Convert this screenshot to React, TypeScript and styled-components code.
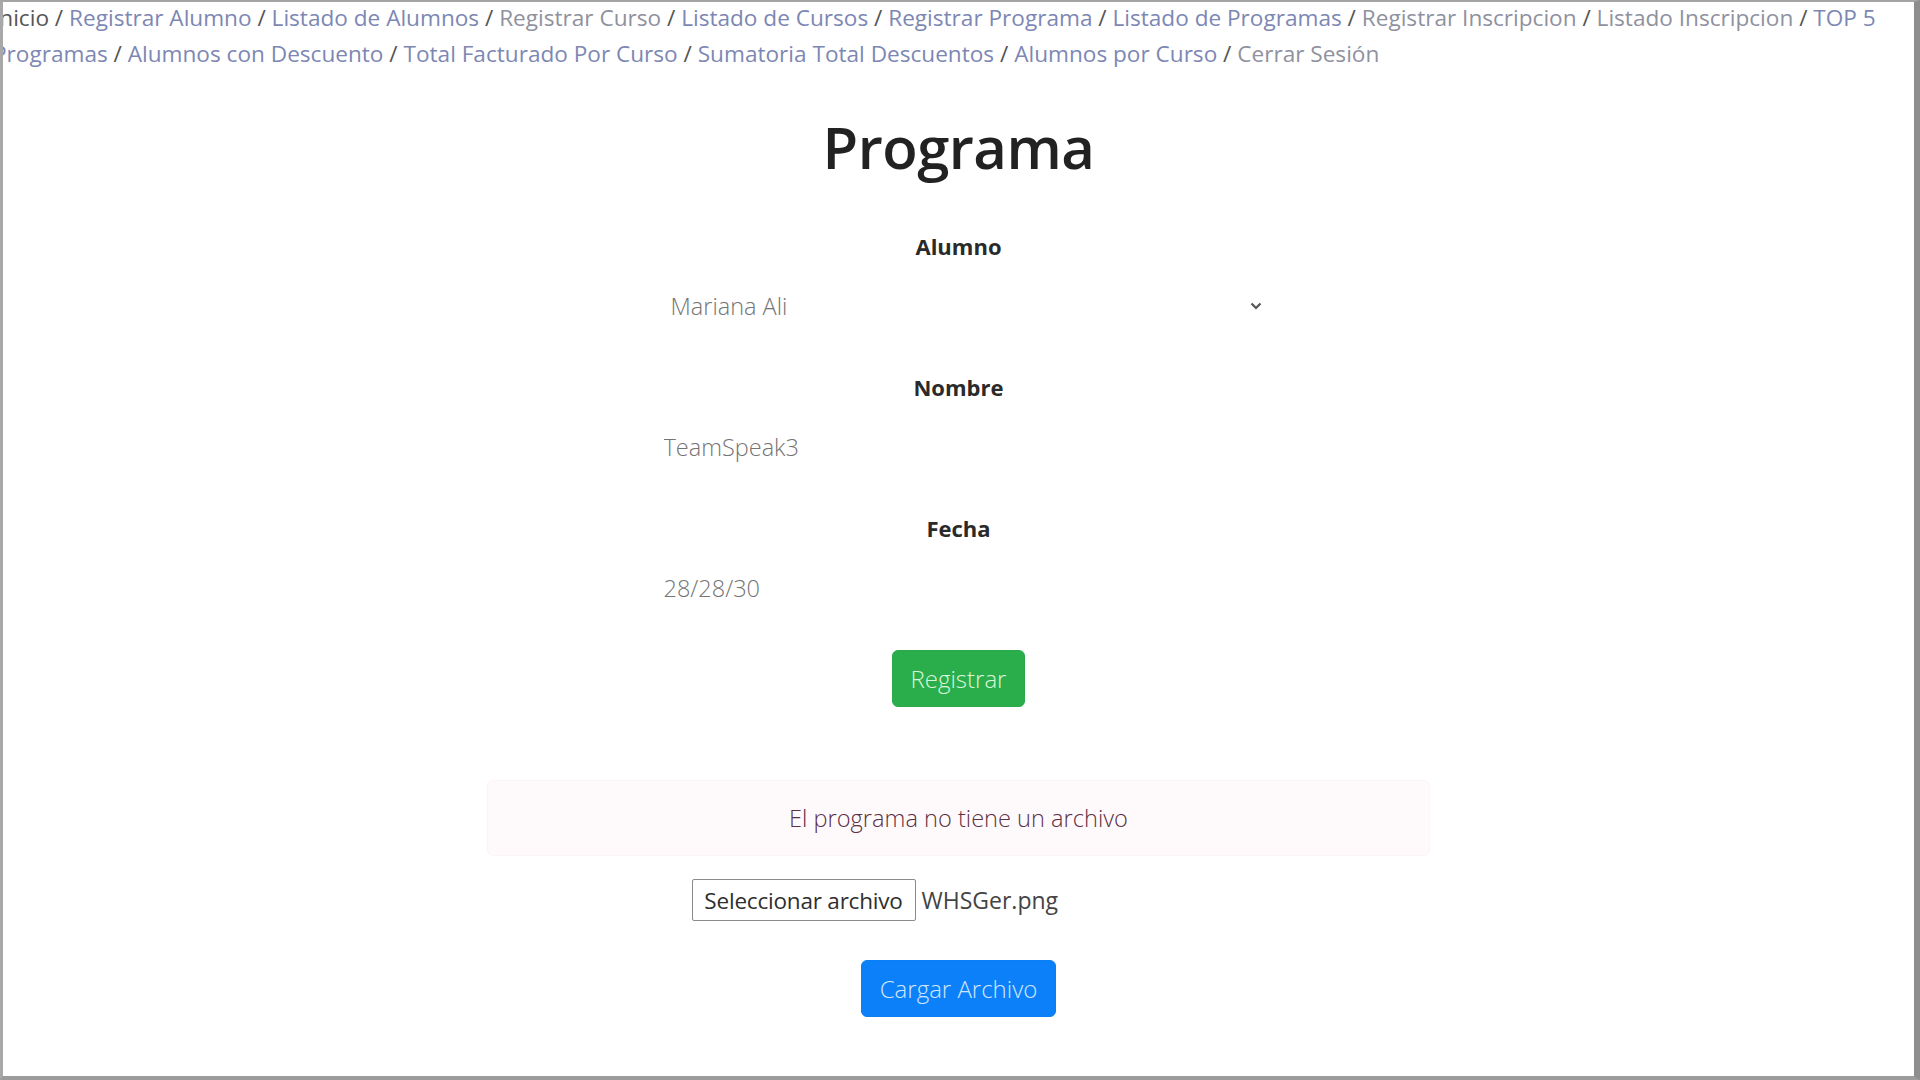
import React from "react";
import styled, { createGlobalStyle } from "styled-components";

const GlobalStyle = createGlobalStyle`
  html, body { margin: 0; padding: 0; background: #ffffff; }
  body { font-family: "Open Sans", "Noto Sans", Roboto, sans-serif; }
  * { box-sizing: border-box; }
`;

const FONT = `"Open Sans", "Noto Sans", Roboto, sans-serif`;

const Frame = styled.div`
  width: 1920px;
  height: 1080px;
  overflow: hidden;
  background: #ffffff;
  border-top: 2px solid #a4a4a4;
  border-left: 3px solid #a8a8a8;
  border-right: 6px solid #8e8e8e;
  border-bottom: 4px solid #9c9c9c;
  display: flex;
  flex-direction: column;
`;

const Nav = styled.nav`
  margin: -2px 0 0 -10px;
  width: 1905px;
  font-family: ${FONT};
  font-size: 22.6px;
  line-height: 36px;
  color: #5c5c5c;
`;

const NavLink = styled.a<{ $muted?: boolean }>`
  color: ${(p) => (p.$muted ? "#8f919e" : "#7d87b3")};
  text-decoration: none;
`;

const Sep = styled.span`
  color: #555555;
`;

const Main = styled.main`
  display: flex;
  flex-direction: column;
  align-items: center;
`;

const Title = styled.h1`
  margin: 39px 0 0;
  font-family: ${FONT};
  font-size: 58px;
  font-weight: 600;
  line-height: 72px;
  color: #222222;
  letter-spacing: -0.5px;
`;

const Form = styled.form`
  width: 626px;
  display: flex;
  flex-direction: column;
  gap: 35px;
  margin-top: 45px;
`;

const Group = styled.div`
  display: flex;
  flex-direction: column;
  gap: 14px;
`;

const Label = styled.label`
  text-align: center;
  font-family: ${FONT};
  font-size: 22px;
  font-weight: 700;
  line-height: 36px;
  color: #2a2a2a;
`;

const controlBase = `
  width: 100%;
  height: 56px;
  border: none;
  background-color: #ffffff;
  font-family: ${FONT};
  font-size: 23.5px;
  font-weight: 300;
  color: #747474;
  outline: none;
`;

const chevron =
  "data:image/svg+xml;utf8," +
  encodeURIComponent(
    `<svg xmlns="http://www.w3.org/2000/svg" width="12" height="8" viewBox="0 0 12 8"><path d="M1.5 1.5 L6 6 L10.5 1.5" fill="none" stroke="#555" stroke-width="2.2"/></svg>`
  );

const Select = styled.select`
  ${controlBase}
  appearance: none;
  padding: 0 40px 0 25px;
  background-image: url("${chevron}");
  background-repeat: no-repeat;
  background-position: right 10px center;
  background-size: 12px 8px;
`;

const Input = styled.input`
  ${controlBase}
  padding: 0 18px;
`;

const SubmitRow = styled.div`
  display: flex;
  justify-content: center;
  margin-top: -1px;
`;

const Button = styled.button<{ $variant: "success" | "primary" }>`
  height: 57px;
  padding: 0 18px;
  border: 1px solid ${(p) => (p.$variant === "success" ? "#2aa84a" : "#0a7ff5")};
  border-radius: 6px;
  background: ${(p) => (p.$variant === "success" ? "#2aae4c" : "#0b80f8")};
  color: ${(p) => (p.$variant === "success" ? "#d9f5da" : "#cfe6ff")};
  font-family: ${FONT};
  font-size: 24px;
  font-weight: 300;
  cursor: pointer;
`;

const Alert = styled.div`
  margin-top: 73px;
  width: 943px;
  height: 76px;
  display: flex;
  align-items: center;
  justify-content: center;
  background: #fefafc;
  border: 1px solid #fdf4f7;
  border-radius: 6px;
  font-family: ${FONT};
  font-size: 23.6px;
  font-weight: 300;
  color: #5d3044;
`;

const FileRow = styled.div`
  margin-top: 23px;
  width: 534px;
  display: flex;
  align-items: center;
  gap: 6px;
`;

const FileButton = styled.label`
  height: 42px;
  width: 224px;
  display: flex;
  align-items: center;
  justify-content: center;
  border: 1px solid #8a8a8a;
  border-radius: 2px;
  background: #ffffff;
  font-family: ${FONT};
  font-size: 22.5px;
  color: #2e2e2e;
  letter-spacing: -0.2px;
  white-space: nowrap;
`;

const FileName = styled.span`
  font-family: ${FONT};
  font-size: 23px;
  color: #444444;
`;

const UploadRow = styled.div`
  margin-top: 39px;
  display: flex;
  justify-content: center;
`;

type LinkItem = { text: string; muted?: boolean };

const links: LinkItem[] = [
  { text: "Registrar Alumno" },
  { text: "Listado de Alumnos" },
  { text: "Registrar Curso", muted: true },
  { text: "Listado de Cursos" },
  { text: "Registrar Programa" },
  { text: "Listado de Programas" },
  { text: "Registrar Inscripcion", muted: true },
  { text: "Listado Inscripcion", muted: true },
  { text: "TOP\u00a05 Programas" },
  { text: "Alumnos con Descuento" },
  { text: "Total Facturado Por Curso" },
  { text: "Sumatoria Total Descuentos" },
  { text: "Alumnos por Curso" },
  { text: "Cerrar Sesión", muted: true },
];

export default function App() {
  return (
    <>
      <GlobalStyle />
      <Frame>
        <Nav>
          <Sep>Inicio</Sep>
          {links.map((l) => (
            <React.Fragment key={l.text}>
              <Sep> / </Sep>
              <NavLink href="#" $muted={l.muted}>
                {l.text}
              </NavLink>
            </React.Fragment>
          ))}
        </Nav>
        <Main>
          <Title>Programa</Title>
          <Form onSubmit={(e) => e.preventDefault()}>
            <Group>
              <Label>Alumno</Label>
              <Select defaultValue="Mariana Ali">
                <option>Mariana Ali</option>
              </Select>
            </Group>
            <Group>
              <Label>Nombre</Label>
              <Input defaultValue="TeamSpeak3" />
            </Group>
            <Group>
              <Label>Fecha</Label>
              <Input defaultValue="28/28/30" />
            </Group>
            <SubmitRow>
              <Button type="submit" $variant="success">Registrar</Button>
            </SubmitRow>
          </Form>
          <Alert>El programa no tiene un archivo</Alert>
          <FileRow>
            <FileButton>Seleccionar archivo</FileButton>
            <FileName>WHSGer.png</FileName>
          </FileRow>
          <UploadRow>
            <Button type="button" $variant="primary">Cargar Archivo</Button>
          </UploadRow>
        </Main>
      </Frame>
    </>
  );
}
